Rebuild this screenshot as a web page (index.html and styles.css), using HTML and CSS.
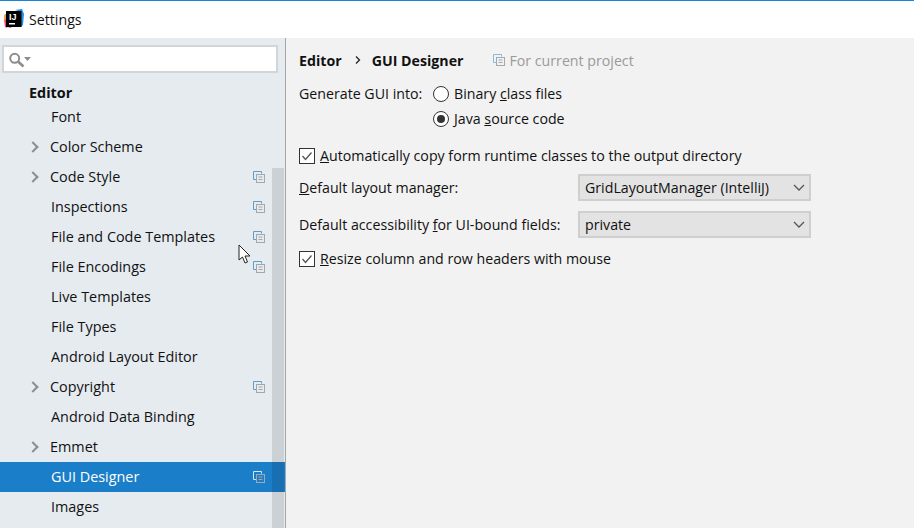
FILE: index.html
```html
<!DOCTYPE html>
<html>
    <head>
        <meta charset="utf-8">
        <title>Settings</title>
        <link rel="stylesheet" href="styles.css">
    </head>
    <body>
        <svg class="defs" width="0" height="0">
            <symbol id="copy" viewBox="0 0 12 12">
                <path d="M3.500 8.500H.5V.5h8v2" fill="none" stroke="currentColor"/>
                <rect x="3.500" y="3.500" width="8" height="8" fill="none" stroke="#a3a8ad"/>
                <path d="M5.500 6h4M5.500 8.500h4" stroke="#a3a8ad"/>
            </symbol>
        </svg>
        <div class="titlebar">
            <svg class="logo" width="20" height="20" viewBox="0 0 20 20">
                <path d="M0 11l3-3v11l-2-1z" fill="#f0487a"/>
                <path d="M0 6l3-2v6l-3 1z" fill="#f7a13a"/>
                <path d="M3 18l4 1 1-2H3z" fill="#f0487a"/>
                <path d="M11 1l7-1 2 5-1 11-2 2V3z" fill="#1f8fe8"/>
                <rect x="2" y="2" width="15.500" height="16" fill="#000"/>
                <rect x="5" y="14" width="6" height="1.500" fill="#fff"/>
                <text x="5" y="10.500" class="logotext">IJ</text>
            </svg>
            <span>Settings</span>
        </div>
        <div class="window">
            <div class="sidebar">
                <div class="search">
                    <svg width="24" height="18" viewBox="0 0 24 18">
                        <circle cx="6.700" cy="8.300" r="4.500" fill="none" stroke="#8c8c8c" stroke-width="2"/>
                        <path d="M10 11.500l5.500 5" stroke="#8c8c8c" stroke-width="2.600"/>
                        <path d="M16 7h7l-3.500 4z" fill="#8c8c8c"/>
                    </svg>
                </div>
                <div class="group">Editor</div>
                <div class="row">Font</div>
                <div class="row parent"><i class="arrow"></i>Color Scheme</div>
                <div class="row parent"><i class="arrow"></i>Code Style<svg class="copy"><use href="#copy"/></svg></div>
                <div class="row">Inspections<svg class="copy"><use href="#copy"/></svg></div>
                <div class="row">File and Code Templates<svg class="copy"><use href="#copy"/></svg></div>
                <div class="row">File Encodings<svg class="copy"><use href="#copy"/></svg></div>
                <div class="row">Live Templates</div>
                <div class="row">File Types</div>
                <div class="row">Android Layout Editor</div>
                <div class="row parent"><i class="arrow"></i>Copyright<svg class="copy"><use href="#copy"/></svg></div>
                <div class="row">Android Data Binding</div>
                <div class="row parent"><i class="arrow"></i>Emmet</div>
                <div class="row selected">GUI Designer<svg class="copy"><use href="#copy"/></svg></div>
                <div class="row">Images</div>
                <div class="scrollbar"></div>
                <svg class="cursor" width="14" height="20" viewBox="0 0 14 20">
                    <path d="M1 1v15l3.500-3 2.500 6 2.500-1-2.500-6h5z" fill="#fff" stroke="#222"/>
                </svg>
            </div>
            <div class="main">
                <div class="crumbs">
                    <b>Editor</b>
                    <svg class="crumbarrow" width="6" height="8" viewBox="0 0 6 8"><path d="M1 .5L4.500 4 1 7.500" fill="none" stroke="#222" stroke-width="1.300"/></svg>
                    <b>GUI Designer</b>
                    <svg class="scope" width="12" height="12"><use href="#copy"/></svg>
                    <span class="hint">For current project</span>
                </div>
                <div class="generate">
                    <span class="genlabel">Generate GUI into:</span>
                    <div class="radios">
                        <div class="option"><i class="radio"></i><span>Binary <u>c</u>lass files</span></div>
                        <div class="option"><i class="radio on"></i><span>Java <u>s</u>ource code</span></div>
                    </div>
                </div>
                <div class="option check first">
                    <svg class="checkbox" width="16" height="16" viewBox="0 0 16 16"><rect x=".5" y=".5" width="15" height="15" fill="#fff" stroke="#333"/><path d="M3.500 8l3 3.500 6-7" fill="none" stroke="#555" stroke-width="1.300"/></svg>
                    <span><u>A</u>utomatically copy form runtime classes to the output directory</span>
                </div>
                <div class="field">
                    <label><u>D</u>efault layout manager:</label>
                    <div class="combo">GridLayoutManager (IntelliJ)<svg width="12" height="7" viewBox="0 0 12 7"><path d="M1 1l5 5 5-5" fill="none" stroke="#555" stroke-width="1.300"/></svg></div>
                </div>
                <div class="field">
                    <label>Default accessibility <u>f</u>or UI-bound fields:</label>
                    <div class="combo">private<svg width="12" height="7" viewBox="0 0 12 7"><path d="M1 1l5 5 5-5" fill="none" stroke="#555" stroke-width="1.300"/></svg></div>
                </div>
                <div class="option check last">
                    <svg class="checkbox" width="16" height="16" viewBox="0 0 16 16"><rect x=".5" y=".5" width="15" height="15" fill="#fff" stroke="#333"/><path d="M3.500 8l3 3.500 6-7" fill="none" stroke="#555" stroke-width="1.300"/></svg>
                    <span><u>R</u>esize column and row headers with mouse</span>
                </div>
            </div>
        </div>
    </body>
</html>
```
FILE: styles.css
```css
*{
    margin: 0;
    padding: 0;
    box-sizing: border-box;
}
html,body{
    height: 100%;
    overflow: hidden;
}
body{
    font-family: "Open Sans", "Noto Sans", sans-serif;
    font-size: 14.2px;
    color: #111;
    background-color: #f2f2f2;
    display: flex;
    flex-direction: column;
}
.defs{
    position: absolute;
}
.titlebar{
    height: 38px;
    flex: none;
    background-color: #fff;
    border-top: 1px solid #1b86d8;
    display: flex;
    align-items: center;
    padding: 0 0 1px 4px;
    gap: 5px;
}
.logotext{
    font: bold 9px "Liberation Sans", sans-serif;
    fill: #fff;
}
.window{
    flex: 1;
    display: flex;
    min-height: 0;
}
.sidebar{
    width: 286px;
    flex: none;
    background-color: #e6ebf0;
    border-right: 1px solid #a6a6a6;
    position: relative;
    overflow: hidden;
    padding-top: 7px;
    font-size: 14.4px;
}
.search{
    width: 276px;
    height: 28px;
    margin-left: 2px;
    background-color: #fff;
    border: 2px solid #d2d5d8;
    display: flex;
    align-items: center;
    padding-left: 4px;
}
.group{
    font-weight: 700;
    height: 18px;
    line-height: 18px;
    margin-top: 11px;
    padding-left: 29px;
}
.row{
    height: 30px;
    display: flex;
    align-items: center;
    padding: 0 0 2px 51px;
    position: relative;
}
.row.parent{
    padding-left: 50px;
}
.row.selected{
    background-color: #1b7ec8;
    color: #fff;
}
.arrow{
    position: absolute;
    left: 29px;
    top: 11px;
    width: 8px;
    height: 8px;
    border-top: 2px solid #8a8f94;
    border-right: 2px solid #8a8f94;
    transform: rotate(45deg);
}
.copy{
    width: 12px;
    height: 12px;
    position: absolute;
    left: 253px;
    top: 9px;
    color: #5f9ccb;
}
.selected .copy{
    color: #d5e6f3;
}
.scrollbar{
    position: absolute;
    left: 272px;
    top: 130px;
    width: 12px;
    bottom: 0;
    background-color: rgba(0,0,0,.11);
}
.cursor{
    position: absolute;
    left: 238px;
    top: 206px;
}
.main{
    flex: 1;
    padding: 12px 0 0 13px;
}
.crumbs{
    display: flex;
    align-items: center;
    height: 20px;
}
.crumbs b{
    font-weight: 700;
}
.crumbarrow{
    margin: 0 11px 0 13px;
}
.scope{
    margin-left: 30px;
    color: #8fb8d8;
}
.hint{
    margin-left: 4px;
    color: #9a9a9a;
}
.generate{
    display: flex;
    margin-top: 11px;
}
.genlabel{
    width: 134px;
    height: 25px;
    line-height: 25px;
}
.option{
    display: flex;
    align-items: center;
    height: 25px;
    gap: 5px;
}
.radio{
    width: 16px;
    height: 16px;
    border-radius: 50%;
    border: 1px solid #333;
    background-color: #fff;
    position: relative;
}
.radio.on::after{
    content: "";
    position: absolute;
    inset: 3px;
    border-radius: 50%;
    background-color: #333;
}
.check.first{
    margin-top: 12px;
}
.check.last{
    margin-top: 8px;
}
.field{
    display: flex;
    align-items: center;
    height: 27px;
    margin-top: 10px;
}
.check.first + .field{
    margin-top: 6px;
}
.field label{
    width: 279px;
}
.combo{
    width: 233px;
    height: 27px;
    background-color: #e3e3e3;
    border: 2px solid #cfcfcf;
    display: flex;
    align-items: center;
    justify-content: space-between;
    padding: 0 4px 0 5px;
}
```
